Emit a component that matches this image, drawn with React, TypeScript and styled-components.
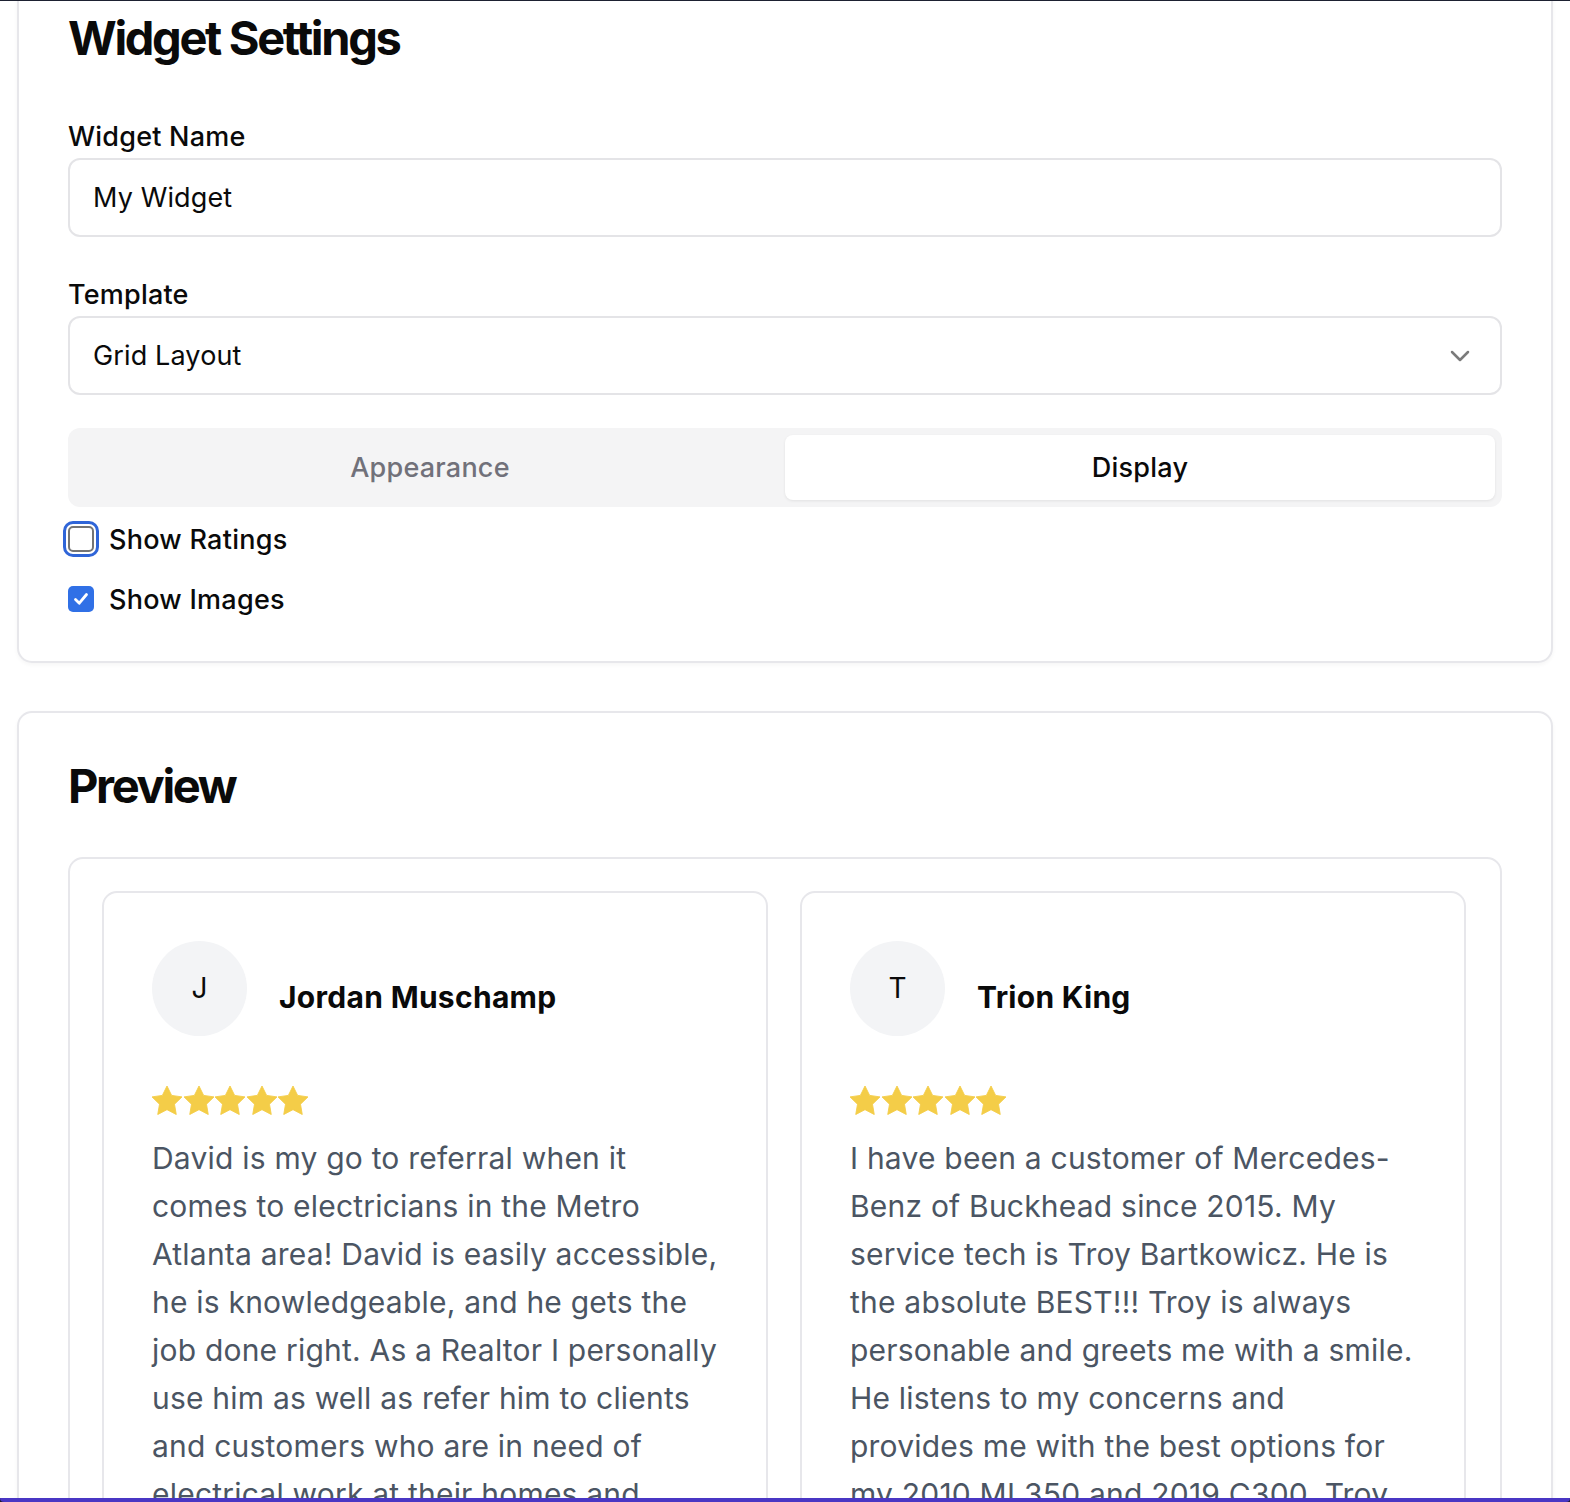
import React from "react";
import styled, { createGlobalStyle } from "styled-components";

const Global = createGlobalStyle`
  html, body { margin: 0; padding: 0; background: #ffffff; }
  body {
    font-family: Inter, "Noto Sans", "Liberation Sans", sans-serif;
    color: #0a0a0a;
    -webkit-font-smoothing: antialiased;
  }
  * { box-sizing: border-box; }
`;

const Viewport = styled.div`
  position: relative;
  height: 100vh;
  overflow: hidden;
  background: #ffffff;
`;

const TopEdge = styled.div`
  position: fixed;
  top: 0;
  left: 0;
  right: 0;
  height: 1px;
  background: #1d2131;
  z-index: 5;
`;

const BottomEdge = styled.div`
  position: fixed;
  left: 0;
  right: 0;
  bottom: 0;
  height: 4px;
  background: #1d1b2e;
  z-index: 5;
  &::after {
    content: "";
    position: absolute;
    inset: 0;
    background: #4a36c4;
    border-radius: 0 0 9px 9px;
  }
`;

const Page = styled.main`
  display: flex;
  flex-direction: column;
  gap: 48px;
  padding: 0 17px;
  margin-top: -37px;
`;

const Card = styled.section<{ $padBottom?: number }>`
  display: flex;
  flex-direction: column;
  background: #ffffff;
  border: 2px solid #e7e7eb;
  border-radius: 15px;
  box-shadow: 0 2px 4px rgba(0, 0, 0, 0.04);
  padding: 49px 49px ${(p) => p.$padBottom ?? 49}px;
`;

const Heading = styled.h2<{ $mb: number }>`
  margin: 0 0 ${(p) => p.$mb}px;
  font-size: 47px;
  line-height: 48px;
  font-weight: 700;
  letter-spacing: -0.05em;
  color: #0a0a0a;
`;

const Field = styled.div<{ $mb: number }>`
  display: flex;
  flex-direction: column;
  gap: 5px;
  margin-bottom: ${(p) => p.$mb}px;
`;

const Label = styled.label`
  font-size: 27px;
  line-height: 32px;
  font-weight: 500;
  letter-spacing: 0.008em;
  color: #0a0a0a;
`;

const TextInput = styled.input`
  height: 79px;
  width: 100%;
  border: 2px solid #e4e4e7;
  border-radius: 12px;
  padding: 0 23px;
  font-family: inherit;
  font-size: 27px;
  letter-spacing: 0.005em;
  color: #0a0a0a;
  background: #ffffff;
  outline: none;
`;

const SelectBox = styled.div`
  height: 79px;
  display: flex;
  align-items: center;
  justify-content: space-between;
  border: 2px solid #e4e4e7;
  border-radius: 12px;
  padding: 0 30px 0 23px;
  font-size: 27px;
  letter-spacing: 0.005em;
  color: #0a0a0a;
  background: #ffffff;
`;

const TabList = styled.div`
  display: grid;
  grid-template-columns: 1fr 1fr;
  height: 79px;
  padding: 7px;
  background: #f4f4f5;
  border-radius: 12px;
  margin-bottom: 14px;
`;

const Tab = styled.div<{ $active?: boolean }>`
  display: flex;
  align-items: center;
  justify-content: center;
  border-radius: 8px;
  font-size: 27px;
  font-weight: 500;
  letter-spacing: 0.008em;
  color: ${(p) => (p.$active ? "#0a0a0a" : "#71717a")};
  background: ${(p) => (p.$active ? "#ffffff" : "transparent")};
  box-shadow: ${(p) => (p.$active ? "0 1px 3px rgba(0,0,0,0.08)" : "none")};
`;

const CheckList = styled.div`
  display: flex;
  flex-direction: column;
  gap: 24px;
`;

const CheckRow = styled.div`
  display: flex;
  align-items: center;
  gap: 15px;
  height: 36px;
  font-size: 27px;
  font-weight: 500;
  letter-spacing: 0.01em;
  color: #0a0a0a;
`;

const Box = styled.span<{ $checked?: boolean; $focused?: boolean }>`
  display: inline-flex;
  align-items: center;
  justify-content: center;
  width: 26px;
  height: 26px;
  border-radius: 5px;
  border: ${(p) => (p.$checked ? "none" : "2px solid #747474")};
  background: ${(p) => (p.$checked ? "#3070e6" : "#ffffff")};
  outline: ${(p) => (p.$focused ? "3px solid #2f65d8" : "none")};
  outline-offset: 2px;
  flex-shrink: 0;
`;

const PreviewFrame = styled.div`
  border: 2px solid #e7e7eb;
  border-radius: 15px;
  padding: 32px 34px 32px 32px;
  display: grid;
  grid-template-columns: 1fr 1fr;
  gap: 32px;
`;

const ReviewCard = styled.article`
  border: 2px solid #e7e7eb;
  border-radius: 15px;
  padding: 48px;
  display: flex;
  flex-direction: column;
`;

const ReviewHeader = styled.div`
  display: flex;
  align-items: center;
  gap: 32px;
  margin-bottom: 50px;
`;

const Avatar = styled.div`
  width: 95px;
  height: 95px;
  border-radius: 50%;
  background: #f3f4f6;
  display: flex;
  align-items: center;
  justify-content: center;
  padding-bottom: 2px;
  font-size: 28px;
  color: #0a0a0a;
  flex-shrink: 0;
`;

const Name = styled.div`
  margin-top: 16px;
  font-size: 30px;
  font-weight: 700;
  letter-spacing: 0.01em;
  color: #0a0a0a;
`;

const Stars = styled.div`
  display: flex;
  gap: 1.5px;
  height: 28px;
  margin-bottom: 20px;
`;

const ReviewText = styled.p`
  margin: 0;
  font-size: 30px;
  line-height: 48px;
  letter-spacing: 0.007em;
  color: #4b5563;
`;

const Star = () => (
  <svg width="30" height="28.5" viewBox="2 2 20 19.02">
    <polygon
      points="12 2 15.09 8.26 22 9.27 17 14.14 18.18 21.02 12 17.77 5.82 21.02 7 14.14 2 9.27 8.91 8.26"
      fill="#f4cd48"
      stroke="#f4cd48"
      strokeWidth="0.6"
      strokeLinejoin="round"
    />
  </svg>
);

const Chevron = () => (
  <svg width="20" height="12" viewBox="0 0 20 12">
    <path d="M2 2 L10 10 L18 2" fill="none" stroke="#7b7b7b" strokeWidth="2.5" strokeLinecap="round" strokeLinejoin="round" />
  </svg>
);

const Check = () => (
  <svg width="18" height="18" viewBox="0 0 18 18">
    <path d="M3.5 9.5 L7.3 13.2 L14.5 4.5" fill="none" stroke="#ffffff" strokeWidth="2.8" strokeLinecap="round" strokeLinejoin="round" />
  </svg>
);

const reviews = [
  {
    initial: "J",
    name: "Jordan Muschamp",
    text:
      "David is my go to referral when it comes to electricians in the Metro Atlanta area! David is easily accessible, he is knowledgeable, and he gets the job done right. As a Realtor I personally use him as well as refer him to clients and customers who are in need of electrical work at their homes and businesses. I highly recommend him!",
  },
  {
    initial: "T",
    name: "Trion King",
    text:
      "I have been a customer of Mercedes-Benz of Buckhead since 2015. My service tech is Troy Bartkowicz. He is the absolute BEST!!! Troy is always personable and greets me with a smile. He listens to my concerns and provides me with the best options for my 2010 ML350 and 2019 C300. Troy is truly an asset to the dealership.",
  },
];

export default function App() {
  return (
    <Viewport>
      <Global />
      <TopEdge />
      <Page>
        <Card $padBottom={44}>
          <Heading $mb={59}>Widget Settings</Heading>
          <Field $mb={42}>
            <Label>Widget Name</Label>
            <TextInput defaultValue="My Widget" />
          </Field>
          <Field $mb={33}>
            <Label>Template</Label>
            <SelectBox>
              <span>Grid Layout</span>
              <Chevron />
            </SelectBox>
          </Field>
          <TabList>
            <Tab>Appearance</Tab>
            <Tab $active>Display</Tab>
          </TabList>
          <CheckList>
            <CheckRow>
              <Box $focused />
              <span>Show Ratings</span>
            </CheckRow>
            <CheckRow>
              <Box $checked>
                <Check />
              </Box>
              <span>Show Images</span>
            </CheckRow>
          </CheckList>
        </Card>
        <Card>
          <Heading $mb={47}>Preview</Heading>
          <PreviewFrame>
            {reviews.map((r) => (
              <ReviewCard key={r.name}>
                <ReviewHeader>
                  <Avatar>{r.initial}</Avatar>
                  <Name>{r.name}</Name>
                </ReviewHeader>
                <Stars>
                  {[0, 1, 2, 3, 4].map((i) => (
                    <Star key={i} />
                  ))}
                </Stars>
                <ReviewText>{r.text}</ReviewText>
              </ReviewCard>
            ))}
          </PreviewFrame>
        </Card>
      </Page>
      <BottomEdge />
    </Viewport>
  );
}
